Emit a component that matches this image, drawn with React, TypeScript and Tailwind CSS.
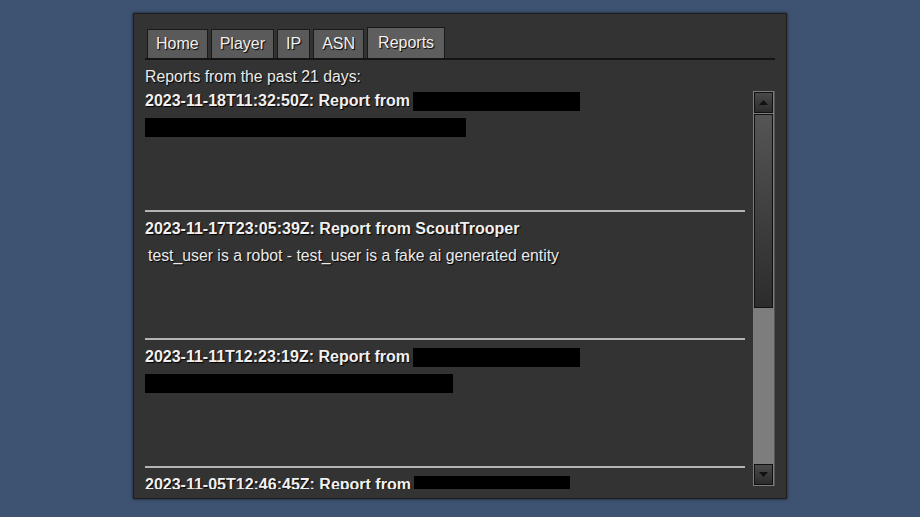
import React from "react";

const tabs = ["Home", "Player", "IP", "ASN", "Reports"];

type Report = {
  date: string;
  from?: string;
  fromBox?: number;
  body?: string;
  bodyBox?: number;
};

const reports: Report[] = [
  { date: "2023-11-18T11:32:50Z", fromBox: 167, bodyBox: 321 },
  {
    date: "2023-11-17T23:05:39Z",
    from: "ScoutTrooper",
    body: "test_user is a robot - test_user is a fake ai generated entity",
  },
  { date: "2023-11-11T12:23:19Z", fromBox: 167, bodyBox: 308 },
  { date: "2023-11-05T12:46:45Z", fromBox: 156, bodyBox: 290 },
];

function ReportEntry({ report }: { report: Report }) {
  return (
    <div className="flex flex-col">
      <div className="flex h-5 items-center whitespace-pre text-[16px] font-bold leading-5 text-[#f0f0f0] [text-shadow:1px_1px_1px_#000]">
        <span>{report.date}: Report from </span>
        {report.from ? (
          <span>{report.from}</span>
        ) : (
          <span
            className="-ml-[1px] inline-block h-[19px] bg-black"
            style={{ width: report.fromBox }}
          />
        )}
      </div>
      <div className="mt-[7px] flex h-[19px] items-center whitespace-pre text-[15.8px] leading-[19px] text-[#ebebeb] [text-shadow:1px_1px_1px_#000]">
        {report.body ? (
          <span className="pl-[3px]">{report.body}</span>
        ) : (
          <span
            className="inline-block h-[19px] bg-black"
            style={{ width: report.bodyBox }}
          />
        )}
      </div>
      <div className="h-[73px]" />
      <div className="h-[2px] w-[600px] bg-[#b4b4b4]" />
      <div className="h-[7px]" />
    </div>
  );
}

export default function App() {
  return (
    <div className="flex h-[517px] w-[920px] justify-center bg-[#3e5271] pt-[13px] font-['Liberation_Sans',Arial,sans-serif]">
      <div className="flex h-[486px] w-[654px] flex-col border border-[#1c1c1c] bg-[#333333] px-[11px] shadow-[0_0_3px_rgba(0,0,0,0.6)]">
        <div className="mt-[13px] flex items-end gap-[3px] border-b-2 border-[#141414] pl-[2px]">
          {tabs.map((t) => (
            <div
              key={t}
              className={`flex items-center border border-b-0 border-[#1a1a1a] text-[16px] text-[#f0f0f0] [text-shadow:1px_1px_1px_#000] ${
                t === "Reports"
                  ? "h-[31px] bg-[#5e5e5e] px-[10px]"
                  : "h-[29px] bg-[#5a5a5a] px-[8px]"
              }`}
            >
              {t}
            </div>
          ))}
        </div>
        <div className="mt-[7px] h-[19px] text-[15.8px] leading-[19px] text-[#ebebeb] [text-shadow:1px_1px_1px_#000]">
          Reports from the past 21 days:
        </div>
        <div className="mt-[5px] flex h-[398px] gap-[8px]">
          <div className="h-full w-[600px] overflow-hidden">
            {reports.map((r) => (
              <ReportEntry key={r.date} report={r} />
            ))}
          </div>
          <div className="flex h-[395px] w-[22px] flex-col border-r border-[#555555] bg-[#7d7d7d] pt-[1px]">
            <div className="mx-[1px] flex h-[21px] items-center justify-center border border-[#111111] bg-gradient-to-b from-[#4a4a4a] to-[#2c2c2c]">
              <svg width="9" height="5" viewBox="0 0 9 5">
                <path d="M4.5 0 L9 5 L0 5 Z" fill="#111" />
              </svg>
            </div>
            <div className="mx-[1px] mt-[1px] h-[194px] border border-[#111111] bg-gradient-to-b from-[#555555] to-[#2c2c2c]" />
            <div className="flex-1" />
            <div className="mx-[1px] mb-[1px] flex h-[21px] items-center justify-center border border-[#111111] bg-gradient-to-b from-[#4a4a4a] to-[#2c2c2c]">
              <svg width="9" height="5" viewBox="0 0 9 5">
                <path d="M0 0 L9 0 L4.5 5 Z" fill="#111" />
              </svg>
            </div>
          </div>
        </div>
      </div>
    </div>
  );
}
